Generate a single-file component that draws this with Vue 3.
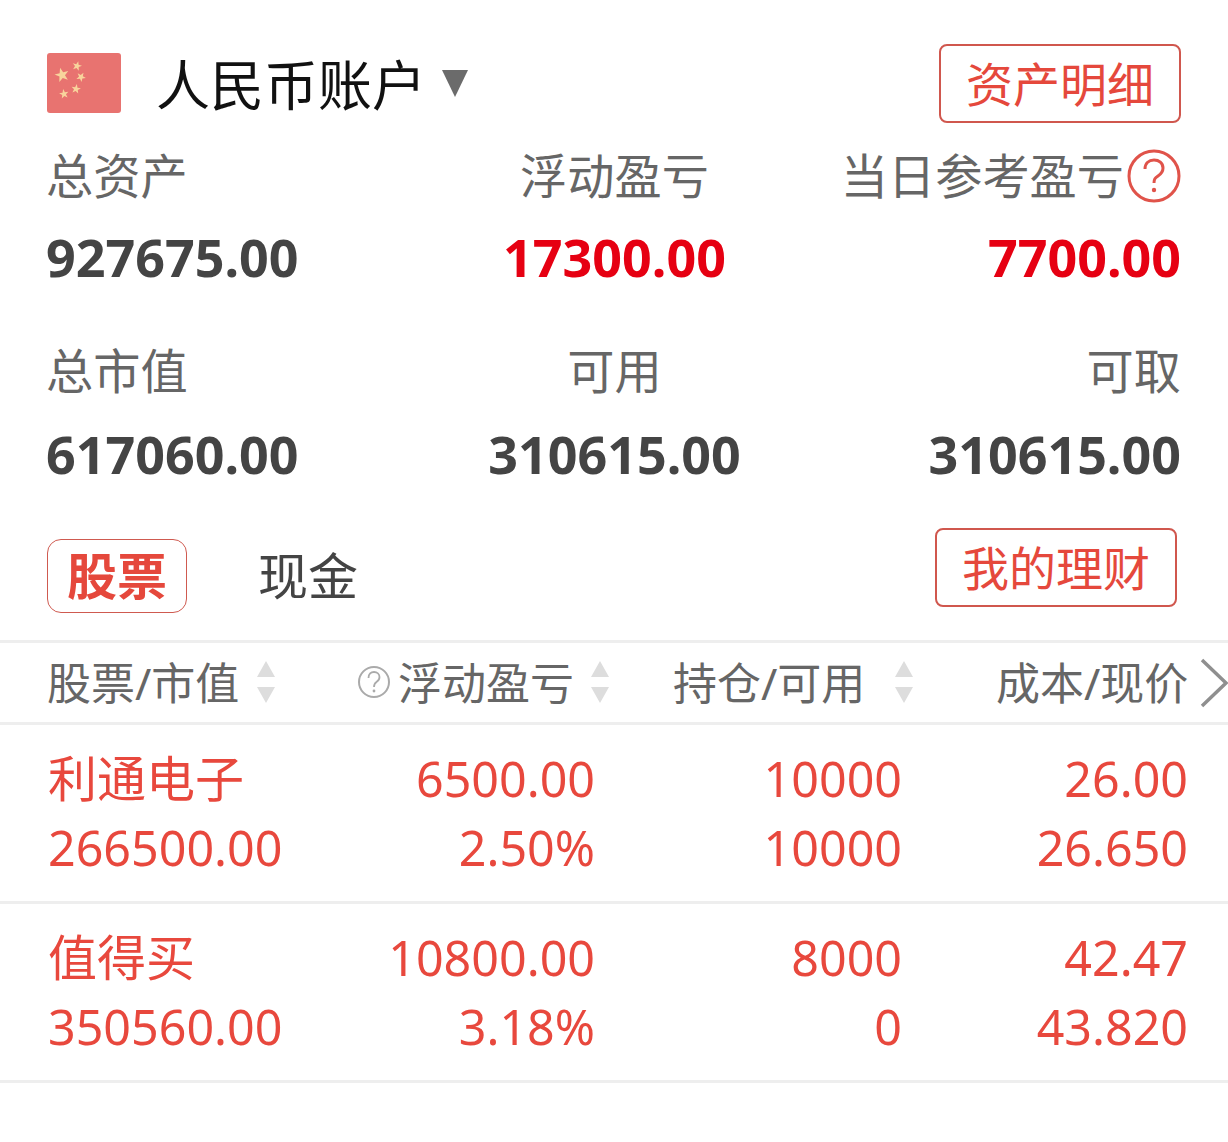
<script setup>
const summary = [
  [
    { label: '总资产', value: '927675.00', align: 'left' },
    { label: '浮动盈亏', value: '17300.00', align: 'center', red: true },
    { label: '当日参考盈亏', value: '7700.00', align: 'right', red: true, help: true },
  ],
  [
    { label: '总市值', value: '617060.00', align: 'left' },
    { label: '可用', value: '310615.00', align: 'center' },
    { label: '可取', value: '310615.00', align: 'right' },
  ],
]
const rows = [
  ['利通电子', '6500.00', '10000', '26.00', '266500.00', '2.50%', '10000', '26.650'],
  ['值得买', '10800.00', '8000', '42.47', '350560.00', '3.18%', '0', '43.820'],
]
const stars = [
  { x: 15, y: 22, r: 7.5, a: -15 },
  { x: 30, y: 13, r: 5, a: 15 },
  { x: 34, y: 24, r: 5, a: 30 },
  { x: 29, y: 36, r: 5, a: 10 },
  { x: 17, y: 41, r: 5, a: -10 },
]
</script>

<template>
  <div class="page">
    <header class="head">
      <svg class="flag" viewBox="0 0 74 60">
        <rect width="74" height="60" rx="3" fill="#e87370" />
        <polygon
          v-for="s in stars"
          :key="s.x"
          points="0,-1 .24,-.31 .95,-.31 .38,.12 .59,.81 0,.4 -.59,.81 -.38,.12 -.95,-.31 -.24,-.31"
          fill="#f8d49c"
          :transform="`translate(${s.x} ${s.y}) rotate(${s.a}) scale(${s.r})`"
        />
      </svg>
      <h1 class="title">人民币账户</h1>
      <span class="caret"></span>
      <a class="btn detail">资产明细</a>
    </header>

    <section v-for="(group, i) in summary" :key="i" class="stats" :class="{ second: i === 1 }">
      <div v-for="cell in group" :key="cell.label" class="stat" :class="cell.align">
        <div class="label">
          <span>{{ cell.label }}</span>
          <svg v-if="cell.help" class="help" viewBox="0 0 54 54">
            <circle cx="27" cy="27" r="25" fill="none" stroke="#e0534a" stroke-width="3" />
            <path d="M18 20c0-6 4-9 9-9s9 3 9 8c0 4-2 6-5 8-3 2-4 3-4 7" fill="none" stroke="#e0534a" stroke-width="3" />
            <circle cx="27" cy="41" r="2.200" fill="#e0534a" />
          </svg>
        </div>
        <div class="value" :class="{ red: cell.red }">{{ cell.value }}</div>
      </div>
    </section>

    <nav class="tabs">
      <span class="tab active">股票</span>
      <span class="tab plain">现金</span>
      <a class="btn finance">我的理财</a>
    </nav>

    <div class="thead">
      <div class="th c1">股票/市值<i class="sort"></i></div>
      <div class="th c2">
        <svg class="hint" viewBox="0 0 34 34">
          <circle cx="17" cy="17" r="15" fill="none" stroke="#aaa" stroke-width="2" />
          <path d="M11.500 13c0-4 2.500-6 5.500-6s5.500 2 5.500 5c0 3-1.500 4-3 5-1.800 1.200-2.500 2-2.500 5" fill="none" stroke="#aaa" stroke-width="1.800" />
          <circle cx="17" cy="26" r="1.400" fill="#aaa" />
        </svg>
        浮动盈亏<i class="sort"></i>
      </div>
      <div class="th c3">持仓/可用<i class="sort wide"></i></div>
      <div class="th c4">成本/现价</div>
      <svg class="chev" viewBox="0 0 30 50">
        <path d="M3 2l24 23L3 48" fill="none" stroke="#8f8f8f" stroke-width="3.500" />
      </svg>
    </div>

    <div v-for="row in rows" :key="row[0]" class="row">
      <span v-for="(cell, idx) in row" :key="idx" class="cell" :class="{ name: idx === 0, first: idx === 4 }">{{ cell }}</span>
    </div>
  </div>
</template>

<style>
html, body { margin: 0; background: #fff; }
</style>

<style scoped>
.page {
  width: 1228px;
  height: 1142px;
  overflow: hidden;
  box-sizing: border-box;
  padding-top: 45px;
  font-family: "Noto Sans", "Noto Sans CJK SC", sans-serif;
  background: #fff;
}
.head {
  display: flex;
  align-items: center;
  height: 77px;
  padding: 0 47px;
}
.flag { width: 74px; height: 60px; margin: 0 35px 2px 0; }
.title {
  margin: 0;
  padding-top: 3px;
  font-size: 54px;
  font-weight: 400;
  line-height: 74px;
  color: #111;
}
.caret {
  width: 0;
  height: 0;
  margin: 0 0 0 16px;
  border-left: 13.500px solid transparent;
  border-right: 13.500px solid transparent;
  border-top: 27px solid #6b6b6b;
}
.btn {
  box-sizing: border-box;
  display: flex;
  align-items: center;
  justify-content: center;
  width: 242px;
  height: 79px;
  margin-left: auto;
  padding-bottom: 4px;
  border: 2px solid #d0574e;
  border-radius: 8px;
  color: #e5483c;
  font-size: 47px;
}
.stats {
  display: grid;
  grid-template-columns: 1fr 1fr 1fr;
  padding: 0 47px 0 48px;
  margin-top: 24px;
}
.stats.second { margin-top: 49px; }
.stat.left { text-align: left; }
.stat.center { text-align: center; }
.stat.right { text-align: right; }
.label {
  display: flex;
  align-items: center;
  height: 60px;
  font-size: 47.200px;
  line-height: 60px;
  color: #666;
}
.left .label { margin-left: -2px; }
.center .label { justify-content: center; }
.right .label { justify-content: flex-end; }
.help { width: 54px; height: 54px; margin-left: 3px; flex: none; }
.value {
  height: 70px;
  margin-top: 16px;
  font-size: 52px;
  font-weight: 700;
  line-height: 70px;
  color: #444;
}
.second .value { margin-top: 18px; }
.stat.left .value { margin-left: -2px; }
.value.red { color: #e60012; }
.tabs {
  display: flex;
  align-items: flex-start;
  box-sizing: border-box;
  height: 151px;
  padding: 39px 51px 0 47px;
}
.tab {
  box-sizing: border-box;
  display: flex;
  align-items: center;
  justify-content: center;
  height: 74px;
  margin-top: 11px;
  padding-bottom: 6px;
  font-size: 50px;
}
.tab.active {
  width: 140px;
  border: 1px solid #cf5a50;
  border-radius: 14px;
  color: #e5483c;
  font-weight: 700;
}
.tab.plain { margin-left: 71px; color: #444; }
.thead {
  position: relative;
  height: 79px;
  border-top: 3px solid #eee;
  border-bottom: 3px solid #eee;
  font-size: 44px;
  color: #666;
}
.th {
  position: absolute;
  top: -2px;
  display: flex;
  align-items: center;
  height: 79px;
  white-space: nowrap;
}
.c1 { left: 47px; }
.c2 { left: 357px; }
.c3 { left: 673px; }
.c4 { left: 996px; }
.sort {
  position: relative;
  display: block;
  width: 18px;
  height: 42px;
  margin-left: 18px;
  top: 1px;
}
.c2 .sort { margin-left: 17px; }
.sort.wide { margin-left: 30px; }
.sort::before, .sort::after {
  content: "";
  position: absolute;
  left: 0;
  border-left: 9px solid transparent;
  border-right: 9px solid transparent;
}
.sort::before { top: 0; border-bottom: 16px solid #ddd; }
.sort::after { bottom: 0; border-top: 16px solid #ddd; }
.hint { width: 34px; height: 34px; margin: 2px 7px 0 0; }
.chev { position: absolute; left: 1199px; top: 15px; width: 30px; height: 50px; }
.row {
  display: grid;
  grid-template-columns: 282px 265px 307px 286px;
  grid-auto-rows: 69px;
  align-content: center;
  box-sizing: border-box;
  height: 179px;
  padding-left: 48px;
  border-bottom: 3px solid #eee;
  color: #e8483d;
  font-size: 48.400px;
  text-align: right;
  line-height: 69px;
}
.cell.name { text-align: left; font-size: 49px; }
.cell.first { text-align: left; }
</style>
